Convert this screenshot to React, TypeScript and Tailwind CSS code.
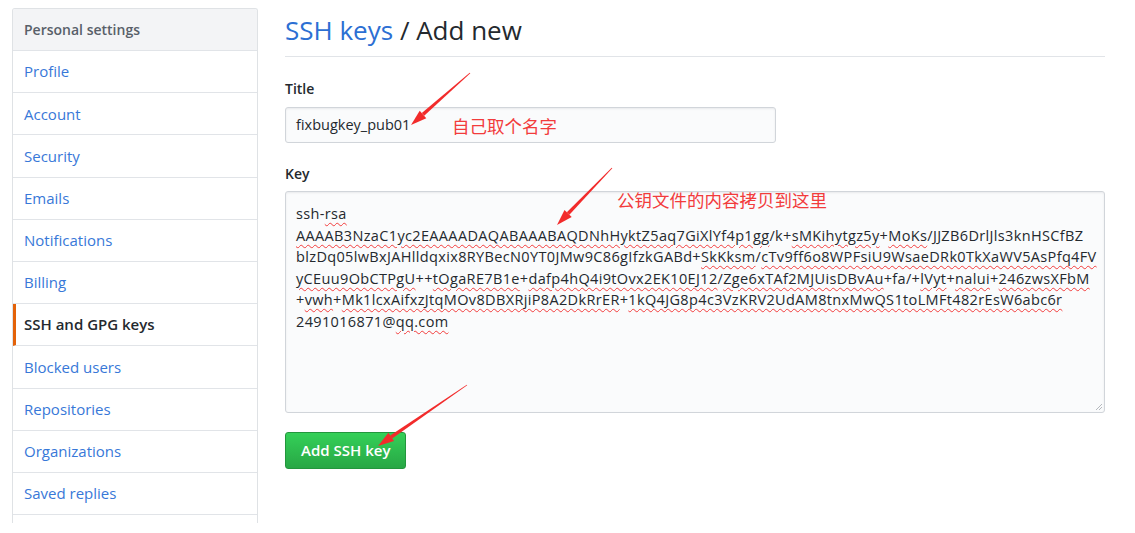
const navItems = [
  "Profile",
  "Account",
  "Security",
  "Emails",
  "Notifications",
  "Billing",
  "SSH and GPG keys",
  "Blocked users",
  "Repositories",
  "Organizations",
  "Saved replies",
  "",
];

type Seg = [string, boolean];

// each line of the key, split into [text, misspelled]
const keyLines: Seg[][] = [
  [["ssh-", false], ["rsa", true]],
  [
    ["AAAAB3NzaC1yc2EAAAADAQABAAABAQDNhHyktZ5aq7GiXlYf4p1gg", true],
    ["/k+", false],
    ["sMKihytgz5y", true],
    ["+", false],
    ["MoKs", true],
    ["/JJZB6DrlJls3knHSCfBZ", false],
  ],
  [
    ["blzDq05lwBxJAHlldqxix8RYBecN0YT0JMw9C86gIfzkGABd+", false],
    ["SkKksm", true],
    ["/", false],
    ["cTv9ff6o8WPFsiU9WsaeDRk0TkXaWV5AsPfq4FV", true],
  ],
  [
    ["yCEuu9ObCTPgU", true],
    ["++", false],
    ["tOgaRE7B1e", true],
    ["+", false],
    ["dafp4hQ4i9tOvx2EK10EJ12", true],
    ["/", false],
    ["Zge6xTAf2MJUisDBvAu", true],
    ["+fa/+", false],
    ["lVyt", true],
    ["+", false],
    ["nalui", true],
    ["+", false],
    ["246zwsXFbM", true],
  ],
  [
    ["+", false],
    ["vwh", true],
    ["+", false],
    ["Mk1lcxAifxzJtqMOv8DBXRjiP8A2DkRrER", true],
    ["+", false],
    ["1kQ4JG8p4c3VzKRV2UdAM8tnxMwQS1toLMFt482rEsW6abc6r", true],
  ],
  [["2491016871@", false], ["qq.com", true]],
];

function Arrow({ x1, y1, x2, y2 }: { x1: number; y1: number; x2: number; y2: number }) {
  const dx = x2 - x1;
  const dy = y2 - y1;
  const len = Math.hypot(dx, dy);
  const ux = dx / len;
  const uy = dy / len;
  const nx = -uy;
  const ny = ux;
  const head = 16;
  const hw = 5;
  const bx = x2 - ux * head;
  const by = y2 - uy * head;
  const p = (x: number, y: number) => `${x.toFixed(1)},${y.toFixed(1)}`;
  const shaft = [
    p(x1 + nx * 0.4, y1 + ny * 0.4),
    p(bx + nx * 1.8, by + ny * 1.8),
    p(bx - nx * 1.8, by - ny * 1.8),
    p(x1 - nx * 0.4, y1 - ny * 0.4),
  ].join(" ");
  const tip = [p(x2, y2), p(bx + nx * hw, by + ny * hw), p(bx - nx * hw, by - ny * hw)].join(" ");
  return (
    <g fill="#f22b2b">
      <polygon points={shaft} />
      <polygon points={tip} />
    </g>
  );
}

export default function App() {
  return (
    <div
      className="relative w-[1135px] h-[533px] overflow-hidden bg-white"
      style={{ fontFamily: '"Open Sans", "Noto Sans CJK SC", sans-serif' }}
    >
      <div className="flex pt-2 pl-3">
        {/* sidebar */}
        <nav className="w-[246px] h-[515px] overflow-hidden border border-b-0 border-[#dfe2e5] rounded-t-[3px] flex flex-col">
          <div className="h-[42px] shrink-0 flex items-center px-[11px] bg-[#f3f4f6] border-b border-[#e1e4e8] text-[14px] text-[#586069] font-semibold">
            Personal settings
          </div>
          {navItems.map((item, i) => {
            const active = item === "SSH and GPG keys";
            return (
              <div
                key={i}
                className={
                  active
                    ? "h-[42.2px] shrink-0 flex items-center px-[8px] border-l-[3px] border-l-[#e36209] border-b border-b-[#e1e4e8] text-[15px] text-[#24292e] font-semibold"
                    : "h-[42.2px] shrink-0 flex items-center px-[11px] border-b border-[#e1e4e8] text-[15px] text-[#3878d8]"
                }
              >
                {item}
              </div>
            );
          })}
        </nav>

        {/* main */}
        <main className="ml-[27px] w-[820px]">
          <h1 className="mt-[4px] leading-[36px] pb-[8px] border-b border-[#e1e4e8] text-[26px] text-[#24292e]">
            <span className="text-[#2c6fd3]">SSH keys</span> / Add new
          </h1>

          <div className="mt-[22px] text-[14px] leading-[20px] font-semibold text-[#24292e]">Title</div>
          <div className="mt-[8px] w-[491px] h-[36px] flex items-center px-[10px] bg-[#fafbfc] border border-[#d1d5da] rounded-[3px] shadow-[inset_0_1px_2px_rgba(27,31,35,0.075)] text-[14.5px] text-[#24292e]">
            fixbugkey_pub01
          </div>

          <div className="mt-[21px] text-[14px] leading-[20px] font-semibold text-[#24292e]">Key</div>
          <div className="relative mt-[7px] w-[820px] h-[222px] pt-[11px] px-[10px] bg-[#fafbfc] border border-[#d1d5da] rounded-[3px] shadow-[inset_0_1px_2px_rgba(27,31,35,0.075)] text-[14.5px] tracking-[0.35px] leading-[21.6px] text-[#24292e]">
            {keyLines.map((line, i) => (
              <div key={i} className="whitespace-nowrap">
                {line.map(([t, bad], j) => (
                  <span
                    key={j}
                    className={bad ? "underline decoration-wavy decoration-[#f23c3c] decoration-1 underline-offset-[3px]" : ""}
                  >
                    {t}
                  </span>
                ))}
              </div>
            ))}
            <svg className="absolute right-[1px] bottom-[1px]" width="10" height="10" viewBox="0 0 10 10">
              <path d="M9 3 L3 9 M9 6 L6 9" stroke="#b5b9be" strokeWidth="1" />
            </svg>
          </div>

          <button className="mt-[19px] h-[37px] px-[15px] rounded-[3px] border border-[#23963d] bg-gradient-to-b from-[#34d058] to-[#28a745] text-white text-[15px] font-semibold">
            Add SSH key
          </button>
        </main>
      </div>

      {/* annotations */}
      <div className="absolute left-[452px] top-[114px] text-[17.5px] leading-[24px] text-[#f23c3c]">自己取个名字</div>
      <div className="absolute left-[617px] top-[188px] text-[17.5px] leading-[24px] text-[#f23c3c]">公钥文件的内容拷贝到这里</div>
      <svg className="absolute left-0 top-0 pointer-events-none" width="1135" height="533">
        <Arrow x1={470} y1={73} x2={411} y2={125} />
        <Arrow x1={612} y1={168} x2={557} y2={225} />
        <Arrow x1={467} y1={385} x2={378} y2={446} />
      </svg>
    </div>
  );
}
